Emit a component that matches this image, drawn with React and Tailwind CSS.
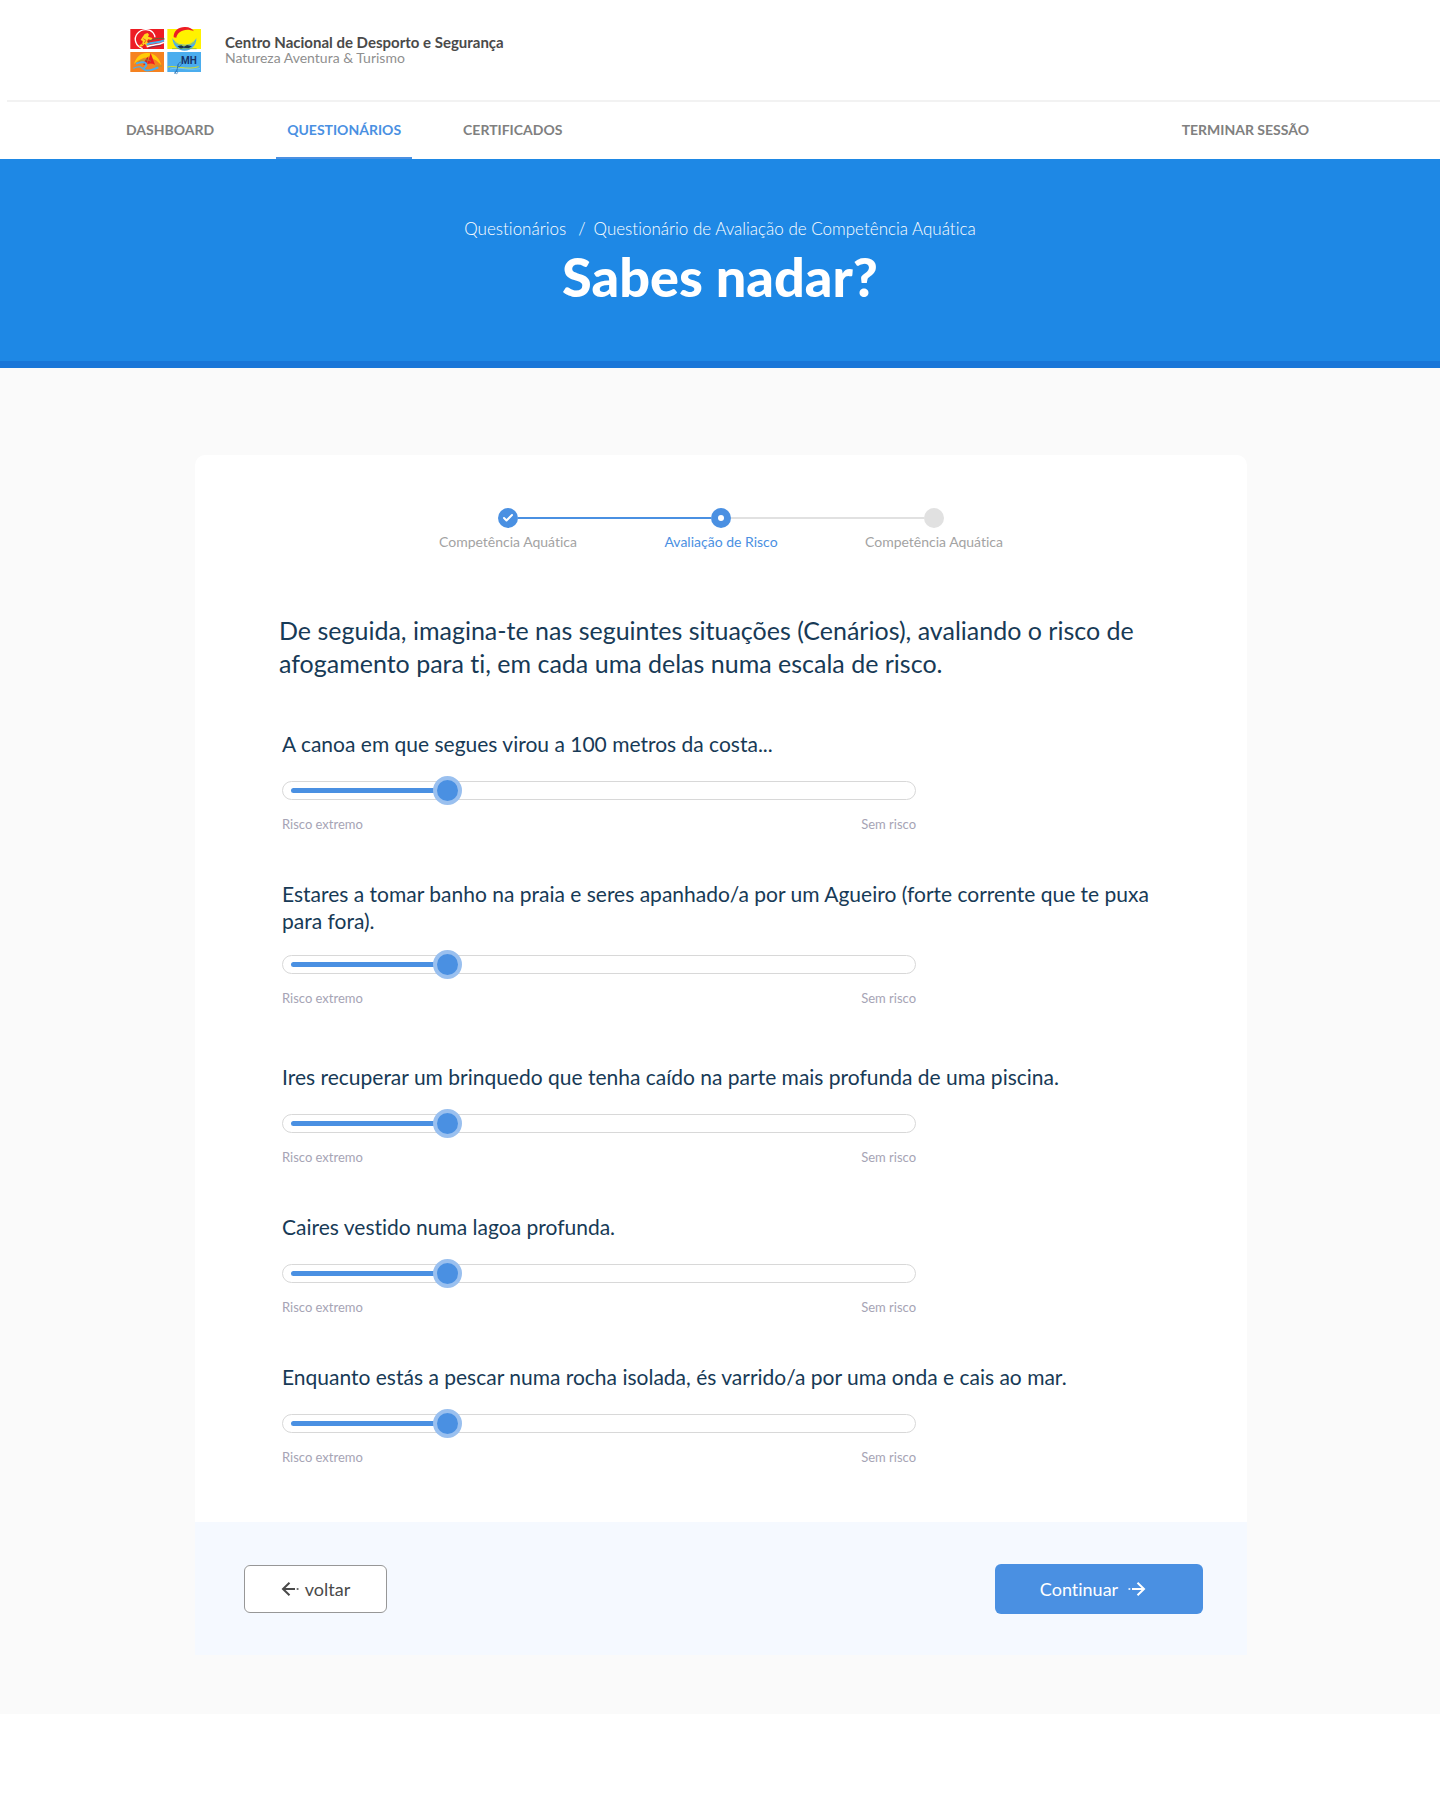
import { useState } from "react";
import { Check } from "lucide-react";

const QUESTIONS = [
  { text: "A canoa em que segues virou a 100 metros da costa...", gap: "mt-[19px]", after: "mb-12" },
  {
    text: "Estares a tomar banho na praia e seres apanhado/a por um Agueiro (forte corrente que te puxa para fora).",
    gap: "mt-4",
    after: "mb-[57px]",
  },
  { text: "Ires recuperar um brinquedo que tenha caído na parte mais profunda de uma piscina.", gap: "mt-[19px]", after: "mb-12" },
  { text: "Caires vestido numa lagoa profunda.", gap: "mt-[19px]", after: "mb-12" },
  { text: "Enquanto estás a pescar numa rocha isolada, és varrido/a por uma onda e cais ao mar.", gap: "mt-[19px]", after: "" },
];

function Logo() {
  return (
    <svg viewBox="24 24 225 156" className="h-[52px] w-[75px]" role="img" aria-label="Centro Nacional de Desporto e Segurança">
      <rect x="31" y="39" width="101" height="60" fill="#ed1c24" />
      <rect x="142" y="39" width="101" height="60" fill="#fff200" />
      <rect x="31" y="108" width="101" height="60" fill="#f58220" />
      <rect x="142" y="108" width="101" height="60" fill="#4badee" />
      <path d="M68 98C46 90 40 68 52 53C64 38 88 37 99 50C103 55 105 60 105 64" fill="none" stroke="#fff" strokeWidth="4" />
      <path d="M74 54l9-3 4 5-3 6 13 4-2 6-11-2-3 7 7 8-6 8-8-10-6 7-11 4 2-7 8-4 1-8-6-3 5-8z" fill="#ffd51e" />
      <path d="M70 68l8 5-5 8m-9 2l6 4" fill="none" stroke="#ed5a24" strokeWidth="3" />
      <path d="M84 78C100 67 118 65 134 69" fill="none" stroke="#5c6a36" strokeWidth="3" />
      <path d="M80 86C98 76 112 83 132 73" fill="none" stroke="#4badee" strokeWidth="6" />
      <path d="M80 93C98 84 112 90 132 79" fill="none" stroke="#fff" strokeWidth="4" />
      <path d="M86 97C102 89 112 91 124 88" fill="none" stroke="#263b75" strokeWidth="2" />
      <circle cx="194" cy="66" r="31" fill="#fff200" />
      <path d="M161 64C160 44 177 32 196 33C208 33 217 38 222 46C205 38 189 41 179 49C172 54 170 60 169 65z" fill="#ed1c24" />
      <path d="M157 66C166 82 180 87 197 86C212 85 224 77 229 66C230 88 214 104 194 104C174 104 159 90 157 66z" fill="#4badee" />
      <path d="M163 78C182 93 205 93 226 77" fill="none" stroke="#b7d333" strokeWidth="3" />
      <path d="M172 91l12-3 8 4 9-5 15 4-10 6-16-2-7 4z" fill="#1b3346" />
      <path d="M156 98h74" stroke="#73a943" strokeWidth="2" />
      <path d="M42 144C50 117 69 107 90 112C108 116 119 129 124 148C107 127 83 119 64 129C55 133 48 139 42 144z" fill="#ffcb08" />
      <path d="M92 111l13 35c-8-4-16-4-24-1z" fill="#ed1c24" />
      <path d="M86 121l-6 25c-4-1-7 0-10 2 2-12 8-20 16-27z" fill="#c62026" />
      <path d="M48 143C67 134 80 140 79 147C78 154 66 157 75 162C84 167 101 160 115 154" fill="none" stroke="#4badee" strokeWidth="6" />
      <path d="M40 157C56 149 68 153 67 160" fill="none" stroke="#4badee" strokeWidth="4" />
      <path d="M55 138C70 128 84 131 93 136M106 150h20" fill="none" stroke="#7cae42" strokeWidth="2" />
      <text x="183" y="145" fill="#17346b" fontSize="30" fontWeight="700" fontFamily="Roboto, sans-serif">
        MH
      </text>
      <path d="M142 153C168 147 200 164 236 152" fill="none" stroke="#d9e021" strokeWidth="3" />
      <path d="M150 159C180 152 205 164 240 158" fill="none" stroke="#8ed8f8" strokeWidth="2" />
      <path d="M163 172C175 168 170 148 178 140C184 135 187 143 181 150C176 155 171 150 174 145" fill="none" stroke="#2a75b8" strokeWidth="3" />
      <circle cx="169" cy="169" r="4" fill="none" stroke="#2a75b8" strokeWidth="2" />
    </svg>
  );
}

function ArrowIcon({ className = "" }) {
  return (
    <svg viewBox="0 0 18 14" className={"h-[14px] w-[18px] " + className} fill="none" stroke="currentColor" strokeWidth="2" aria-hidden="true">
      <path d="M4 7H16M9.500 0.700L16 7L9.500 13.300" />
      <path d="M0.500 7H2.300" strokeWidth="1.600" />
    </svg>
  );
}

function RiskSlider({ id, question }) {
  const [value, setValue] = useState(25);
  return (
    <li className={question.after}>
      <label htmlFor={id} className="block text-[21px] leading-[27px] text-[#173a56]">
        {question.text}
      </label>
      <div className="max-w-[634px]">
        <div className={"grid items-center " + question.gap}>
          <div className="col-start-1 row-start-1 flex h-[19px] items-center rounded-full border border-[#d8d8d8] bg-white px-2">
            <div className="h-[5px] rounded-full bg-[#4a90e2]" style={{ width: `${value}%` }} />
          </div>
          <input
            id={id}
            type="range"
            min="0"
            max="100"
            value={value}
            onChange={(e) => setValue(Number(e.target.value))}
            className="z-10 col-start-1 row-start-1 h-[29px] w-full cursor-pointer appearance-none bg-transparent [&::-webkit-slider-thumb]:h-[29px] [&::-webkit-slider-thumb]:w-[29px] [&::-webkit-slider-thumb]:appearance-none [&::-webkit-slider-thumb]:rounded-full [&::-webkit-slider-thumb]:border-4 [&::-webkit-slider-thumb]:border-[#9ac0ef] [&::-webkit-slider-thumb]:bg-[#4a90e2]"
          />
        </div>
        <div className="mt-[11px] flex justify-between text-[13px] leading-4 text-[#a6a4b5]">
          <span>Risco extremo</span>
          <span>Sem risco</span>
        </div>
      </div>
    </li>
  );
}

function Step({ label, state, before, after }) {
  return (
    <li className="flex flex-1 flex-col items-center" aria-current={state === "current" ? "step" : undefined}>
      <div className="flex w-full items-center">
        <span className={"h-[2px] flex-1 " + before} />
        {state === "done" && (
          <span className="flex size-5 items-center justify-center rounded-full bg-[#4a90e2] text-white">
            <Check size={12} strokeWidth={4} />
          </span>
        )}
        {state === "current" && (
          <span className="flex size-5 items-center justify-center rounded-full bg-[#4a90e2]">
            <span className="size-[6px] rounded-full bg-white" />
          </span>
        )}
        {state === "todo" && <span className="size-5 rounded-full bg-[#e1e1e1]" />}
        <span className={"h-[2px] flex-1 " + after} />
      </div>
      <span className={"mt-1 text-[14px] leading-5 " + (state === "current" ? "text-[#4a90e2]" : "text-[#a3a3a3]")}>{label}</span>
    </li>
  );
}

export default function App() {
  return (
    <div className="min-h-screen bg-white font-['Lato',sans-serif] [font-variant-ligatures:none]">
      <header>
        <div className="flex h-[100px] items-center gap-[22px] pl-32">
          <Logo />
          <div className="leading-[15px]">
            <p className="text-[15px] font-bold text-[#4a4a4a]">Centro Nacional de Desporto e Segurança</p>
            <p className="text-[14px] text-[#8f8f8f]">Natureza Aventura &amp; Turismo</p>
          </div>
        </div>
        <div className="ml-[7px] h-[2px] bg-[#f2f2f2]" />
        <nav className="flex h-[57px] items-stretch justify-between pr-[131px] pl-[126px] text-[14px] font-bold text-[#808080]">
          <div className="flex">
            <a href="#dashboard" className="mr-[62px] flex items-center border-b-2 border-transparent">DASHBOARD</a>
            <a href="#questionarios" aria-current="page" className="mr-[51px] flex items-center border-b-2 border-[#4a90e2] px-[11px] text-[#4a90e2]">QUESTIONÁRIOS</a>
            <a href="#certificados" className="flex items-center border-b-2 border-transparent">CERTIFICADOS</a>
          </div>
          <a href="#sair" className="flex items-center border-b-2 border-transparent">TERMINAR SESSÃO</a>
        </nav>
      </header>

      <section className="border-b-[7px] border-[#1976d8] bg-[#1e88e5] pt-[58px] pb-[52px] text-center text-white">
        <nav aria-label="Localização" className="flex justify-center text-[17px] leading-6 font-light">
          <a href="#questionarios">Questionários</a>
          <span className="mr-2 ml-3">/</span>
          <span>Questionário de Avaliação de Competência Aquática</span>
        </nav>
        <h1 className="mt-1 text-[54px] leading-[64px] font-black">Sabes nadar?</h1>
      </section>

      <main className="bg-[#fafafa] pt-[87px] pr-[193px] pb-[59px] pl-[195px]">
        <form className="rounded-t-[10px] bg-white" onSubmit={(e) => e.preventDefault()}>
          <div className="pt-[53px] pr-[88px] pb-[57px] pl-[84px]">
            <ol className="mx-auto flex max-w-[643px] pl-1">
              <Step label="Competência Aquática" state="done" before="bg-transparent" after="bg-[#4a90e2]" />
              <Step label="Avaliação de Risco" state="current" before="bg-[#4a90e2]" after="bg-[#e1e1e1]" />
              <Step label="Competência Aquática" state="todo" before="bg-[#e1e1e1]" after="bg-transparent" />
            </ol>
            <h2 className="mt-[62px] text-[25px] leading-[33px] text-[#173a56]">
              De seguida, imagina-te nas seguintes situações (Cenários), avaliando o risco de afogamento para ti, em cada uma delas numa escala de risco.
            </h2>
            <ul className="mt-[50px] pl-[3px]">
              {QUESTIONS.map((q, i) => (
                <RiskSlider key={q.text} id={"risco-" + i} question={q} />
              ))}
            </ul>
          </div>
          <div className="flex items-center justify-between bg-[#f5f9ff] pt-[42px] pr-11 pb-[41px] pl-[49px]">
            <button type="button" className="flex h-12 w-[143px] items-center justify-center gap-[6px] rounded-md border border-[#979797] bg-white text-[18px] text-[#4a4a4a]">
              <ArrowIcon className="rotate-180" />
              voltar
            </button>
            <button type="submit" className="flex h-[50px] w-[208px] items-center justify-center gap-[10px] rounded-md bg-[#4a90e2] pr-3 text-[18px] text-white">
              Continuar
              <ArrowIcon />
            </button>
          </div>
        </form>
      </main>
    </div>
  );
}
